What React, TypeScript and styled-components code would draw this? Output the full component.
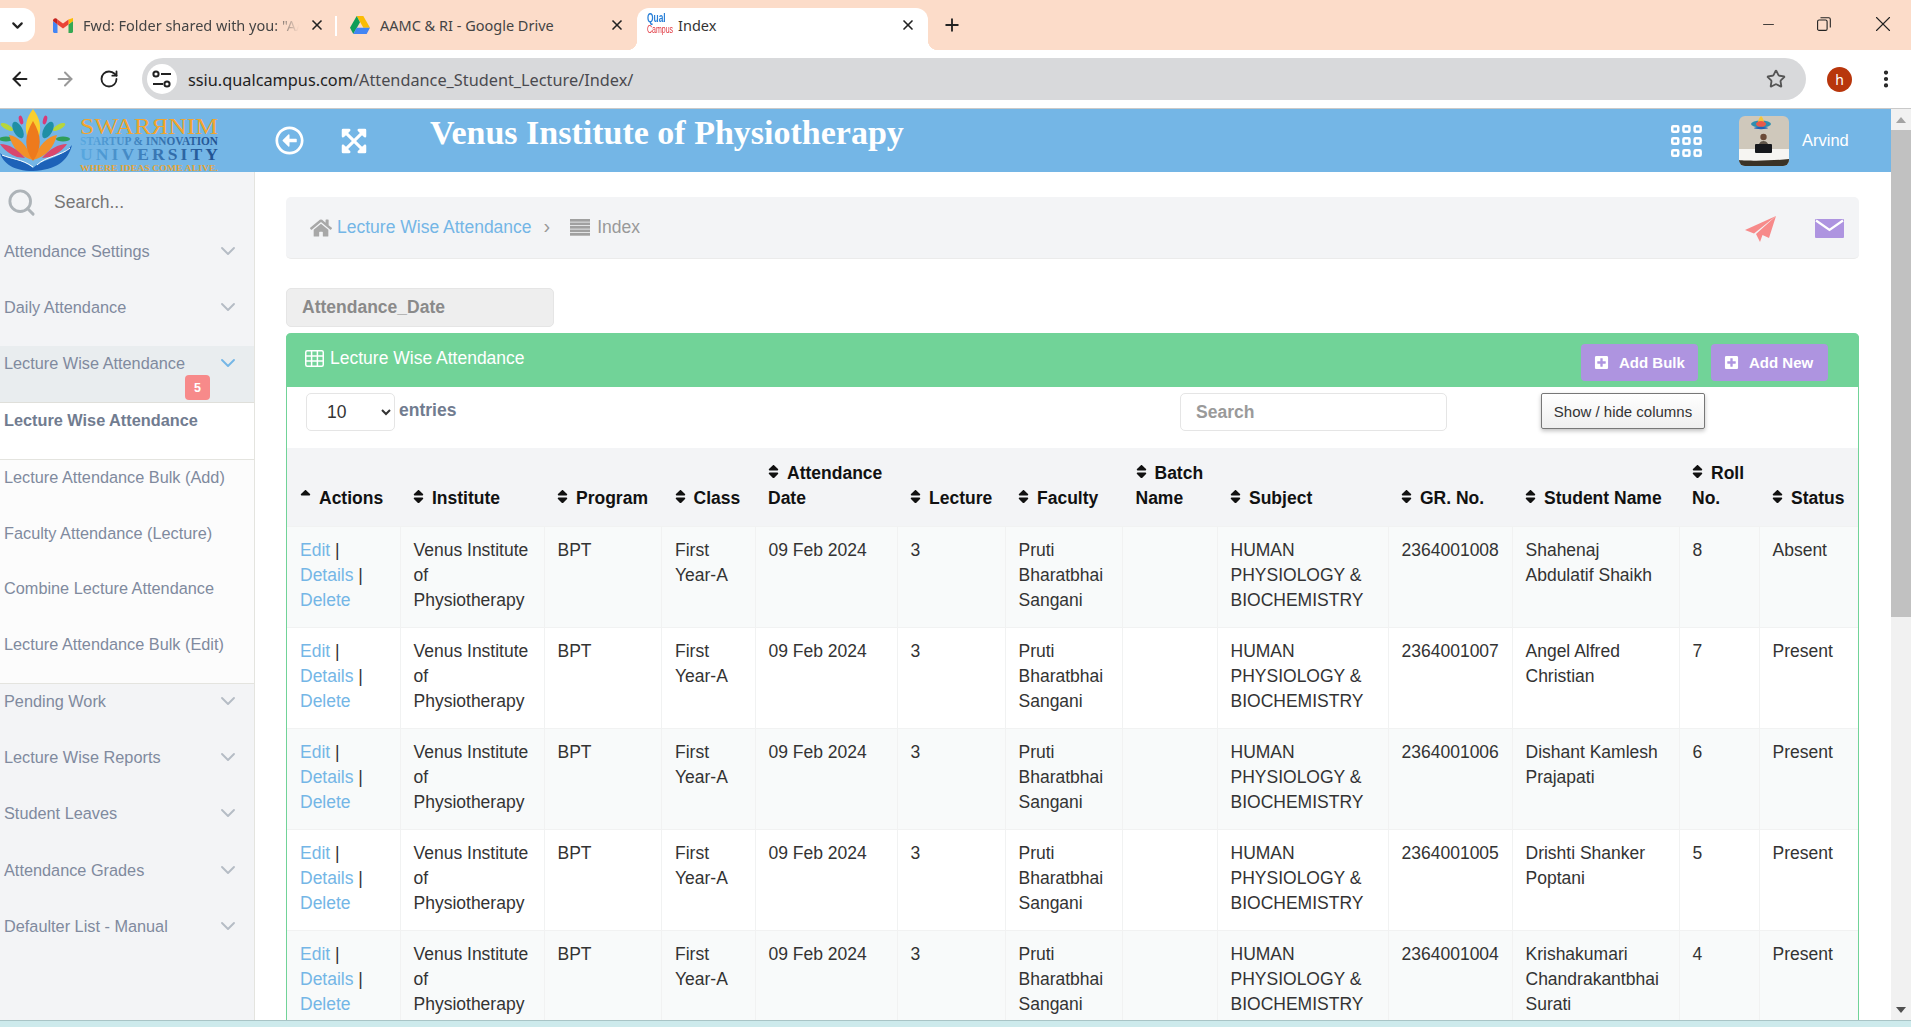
import React from 'react';
import styled, { createGlobalStyle } from 'styled-components';
import { ArrowLeft, ArrowRight, ChevronDown, EllipsisVertical, Minus, Plus, RotateCw, Search, Star, X } from 'lucide-react';
import { FaExpandArrowsAlt, FaHome, FaPlusSquare, FaRegArrowAltCircleLeft, FaSort, FaSortUp } from 'react-icons/fa';

const SIDE_TOP = ['Attendance Settings', 'Daily Attendance'];
const SIDE_SUB = ['Lecture Attendance Bulk (Add)', 'Faculty Attendance (Lecture)', 'Combine Lecture Attendance', 'Lecture Attendance Bulk (Edit)'];
const SIDE_BOTTOM = ['Pending Work', 'Lecture Wise Reports', 'Student Leaves', 'Attendance Grades', 'Defaulter List - Manual'];

const COLUMNS = [
  { label: 'Actions', width: 113 },
  { label: 'Institute', width: 144 },
  { label: 'Program', width: 117.5 },
  { label: 'Class', width: 93.5 },
  { label: 'Attendance Date', width: 142 },
  { label: 'Lecture', width: 108 },
  { label: 'Faculty', width: 117.5 },
  { label: 'Batch Name', width: 94.5 },
  { label: 'Subject', width: 171 },
  { label: 'GR. No.', width: 124 },
  { label: 'Student Name', width: 167 },
  { label: 'Roll No.', width: 80 },
  { label: 'Status', width: 99 },
];

const STUDENTS = [
  { gr: '2364001008', name: 'Shahenaj Abdulatif Shaikh', roll: 8, status: 'Absent' },
  { gr: '2364001007', name: 'Angel Alfred Christian', roll: 7, status: 'Present' },
  { gr: '2364001006', name: 'Dishant Kamlesh Prajapati', roll: 6, status: 'Present' },
  { gr: '2364001005', name: 'Drishti Shanker Poptani', roll: 5, status: 'Present' },
  { gr: '2364001004', name: 'Krishakumari Chandrakantbhai Surati', roll: 4, status: 'Present' },
];

const GmailIcon = () => (
  <svg width="20" height="15" viewBox="0 0 20 15">
    <path d="M0 3v10.5C0 14.3.7 15 1.5 15H4.500V6.500z" fill="#4285f4" />
    <path d="M20 3v10.500c0 .8-.7 1.500-1.500 1.500h-3V6.500z" fill="#34a853" />
    <path d="M15.500 1.500 20 0v3l-4.500 3.500z" fill="#fbbc04" />
    <path d="M4.500 6.500V1.500L10 5.600l5.500-4.100v5L10 10.600z" fill="#ea4335" />
    <path d="M0 3c0-2.400 2.700-3.700 4.500-1.500v5z" fill="#c5221f" />
  </svg>
);

const DriveIcon = () => (
  <svg width="20" height="18" viewBox="0 0 20 18">
    <path d="M6.700 0h6.600l6.700 11.800h-6.600z" fill="#fbbc04" />
    <path d="M6.700 0 0 11.800 3.300 18l6.700-11.800z" fill="#0f9d58" />
    <path d="M6.600 11.800H20L16.700 18H3.300z" fill="#4285f4" />
  </svg>
);

const LogoMark = () => (
  <LogoSvg viewBox="0 0 225 63">
    <defs>
      <linearGradient id="logoBlue" x1="0" x2="1" y1="0" y2="0">
        <stop offset="0" stopColor="#58a8e0" />
        <stop offset="1" stopColor="#1f4f8f" />
      </linearGradient>
    </defs>
    <ellipse cx="7" cy="18" rx="7" ry="2.500" fill="#b7d63c" transform="rotate(28 7 18)" />
    <ellipse cx="59" cy="18" rx="7" ry="2.500" fill="#b7d63c" transform="rotate(-28 59 18)" />
    <ellipse cx="21" cy="11" rx="2" ry="4.500" fill="#d83a78" transform="rotate(-15 21 11)" />
    <ellipse cx="45" cy="11" rx="2" ry="4.500" fill="#d83a78" transform="rotate(15 45 11)" />
    <ellipse cx="18" cy="21" rx="4.500" ry="9" fill="#1f8fa5" transform="rotate(-28 18 21)" />
    <ellipse cx="48" cy="21" rx="4.500" ry="9" fill="#1f8fa5" transform="rotate(28 48 21)" />
    <ellipse cx="6" cy="30" rx="7" ry="2.500" fill="#2f9d5a" />
    <ellipse cx="63" cy="30" rx="7" ry="2.500" fill="#2f9d5a" />
    <path d="M33 0C24 12 23 24 33 40 43 24 42 12 33 0z" fill="#f9cf2f" />
    <path d="M9 26c9 1 18 10 24 25C20 48 12 38 9 26zM57 26c-9 1-18 10-24 25 13-3 21-13 24-25z" fill="#f2902a" />
    <path d="M33 12c-9 15-9 27 0 40 9-13 9-25 0-40z" fill="#ee7a1c" />
    <path d="M0 35c9 0 17 5 25 14l-8-1C11 46 4 41 0 35zM67 35c-9 0-17 5-25 14l8-1c6-2 13-7 17-13z" fill="#d9486e" />
    <path d="M0 44c8 7 22 5 33 15C44 49 60 50 72 36 68 52 56 61 33 62 13 62 3 54 0 44z" fill="#1d62b8" />
    <path d="M2 46c9 4 20 4 31 12M70 39c-9 8-24 8-33 17" fill="none" stroke="#fff" strokeWidth="1" />
    <LogoTitle x="80" y="24.500" textLength="138" lengthAdjust="spacingAndGlyphs">SWARЯNIM</LogoTitle>
    <LogoLine x="80" y="36" textLength="138" lengthAdjust="spacingAndGlyphs">STARTUP &amp; INNOVATION</LogoLine>
    <LogoName x="80" y="51" textLength="138" lengthAdjust="spacing">UNIVERSITY</LogoName>
    <LogoTag x="80" y="62" textLength="138" lengthAdjust="spacingAndGlyphs">WHERE IDEAS COME ALIVE.</LogoTag>
  </LogoSvg>
);

const AvatarPhoto = () => (
  <AvatarSvg viewBox="0 0 50 50">
    <rect width="50" height="50" fill="#cfc8bb" />
    <ellipse cx="22" cy="8" rx="10" ry="3.500" fill="#2f8fb0" />
    <path d="M22 0c-2 2-3 4-3 7h6c0-3-1-5-3-7z" fill="#f4c73a" />
    <ellipse cx="22" cy="8" rx="5" ry="3" fill="#e85a4a" />
    <ellipse cx="22" cy="12" rx="7" ry="1.200" fill="#1d62b8" />
    <rect y="33" width="50" height="12" fill="#f6f5f2" />
    <path d="M0 44c8 1 34 1 50-1v7H0z" fill="#3a3226" />
    <circle cx="24.500" cy="21" r="3.200" fill="#6a4a38" />
    <path d="M19 33c0-5 2-8 5.500-8s5.500 3 5.500 8z" fill="#5e5448" />
    <rect x="16" y="28" width="17" height="9" rx="1" fill="#16181c" />
  </AvatarSvg>
);

const AppGrid = () => (
  <svg width="31" height="32" viewBox="0 0 31 32">
    {[0, 12, 24].flatMap((y) =>
      [0, 11.200, 22.400].map((x) => (
        <rect key={`${x}-${y}`} x={x + 1.25} y={y + 1.25} width="6" height="5.500" rx="1" fill="none" stroke="#fff" strokeWidth="2.500" />
      )),
    )}
  </svg>
);

const PaperPlane = () => (
  <svg width="31" height="26" viewBox="0 0 31 26">
    <path d="M31 0 0 14l9 3.500z" fill="#f78a8a" />
    <path d="M31 0 11 18l4 8 2.500-7 6.500 3z" fill="#f78a8a" />
  </svg>
);

const MailIcon = () => (
  <svg width="29" height="19" viewBox="0 0 29 19">
    <rect width="29" height="19" rx="1" fill="#ae94e0" />
    <path d="M1 1.500 14.500 11 28 1.500" fill="none" stroke="#fff" strokeWidth="2.200" />
  </svg>
);

const ListIcon = () => (
  <svg width="20" height="17" viewBox="0 0 20 17" fill="#a0a0a0">
    {[0, 3.500, 7, 10.500, 14].map((y) => (
      <rect key={y} y={y} width="20" height="2.700" />
    ))}
  </svg>
);

const TableIcon = () => (
  <svg width="19" height="17" viewBox="0 0 19 17" fill="none" stroke="#fff" strokeWidth="1.500">
    <rect x="0.750" y="0.750" width="17.500" height="15.500" rx="1.500" />
    <path d="M0.750 6h17.500M0.750 11h17.500M6.600 0.750v15.500M12.400 0.750v15.500" />
  </svg>
);

const RestoreIcon = () => (
  <svg width="14" height="14" viewBox="0 0 14 14" fill="none" stroke="#222" strokeWidth="1.100">
    <rect x="0.600" y="3" width="9.500" height="10.400" rx="1.500" />
    <path d="M3.500 0.700h8.300a1.500 1.500 0 0 1 1.500 1.500V10.500" />
  </svg>
);

const SidebarItem = ({ label }: { label: string }) => (
  <SideRow>
    <SideLabel>{label}</SideLabel>
    <SideChevron><ChevronDown size={24} color="#b5bcc5" strokeWidth={1.900} /></SideChevron>
  </SideRow>
);

export default function App() {
  return (
    <Screen>
      <GlobalStyle />
      <TabStrip>
        <TabSearch>
          <ChevronDown size={17} strokeWidth={3} color="#222" />
        </TabSearch>
        <Tab $width={297} $divider>
          <GmailIcon />
          <TabTitle $fade>Fwd: Folder shared with you: "AAMC &amp; RI"</TabTitle>
          <TabClose><X size={16} strokeWidth={2.5} /></TabClose>
        </Tab>
        <Tab $width={300}>
          <DriveIcon />
          <TabTitle>AAMC &amp; RI - Google Drive</TabTitle>
          <TabClose><X size={16} strokeWidth={2.5} /></TabClose>
        </Tab>
        <Tab $width={291} $active>
          <Favicon>
            <span>Qual</span>
            <span>Campus</span>
          </Favicon>
          <TabTitle>Index</TabTitle>
          <TabClose><X size={16} strokeWidth={2.5} /></TabClose>
        </Tab>
        <NewTab><Plus size={20} strokeWidth={2.2} color="#222" /></NewTab>
        <WindowControls>
          <Minus size={17} strokeWidth={1.2} color="#222" />
          <RestoreIcon />
          <X size={26} strokeWidth={1} color="#222" />
        </WindowControls>
      </TabStrip>

      <Toolbar>
        <ArrowLeft size={22} strokeWidth={2.2} color="#222" />
        <ArrowRight size={22} strokeWidth={2.2} color="#999" />
        <RotateCw size={20} strokeWidth={2.2} color="#222" />
        <AddressBar>
          <SiteBadge>
            <svg width="20" height="18" viewBox="0 0 20 18" fill="none" stroke="#222" strokeWidth="2">
              <path d="M9 4h10M1 14h10" />
              <circle cx="4" cy="4" r="2.600" />
              <circle cx="15" cy="14" r="2.600" />
            </svg>
          </SiteBadge>
          <Url>ssiu.qualcampus.com<span>/Attendance_Student_Lecture/Index/</span></Url>
          <Star size={20} strokeWidth={2.2} color="#555" />
        </AddressBar>
        <ProfileDot>h</ProfileDot>
        <EllipsisVertical size={22} strokeWidth={2.6} color="#222" />
      </Toolbar>

      <Viewport>
        <Page>
          <Header>
            <LogoMark />
            <HeaderIcon><FaRegArrowAltCircleLeft size={29} /></HeaderIcon>
            <HeaderIcon><FaExpandArrowsAlt size={28} /></HeaderIcon>
            <SiteTitle>Venus Institute of Physiotherapy</SiteTitle>
            <AppGrid />
            <AvatarPhoto />
            <UserName>Arvind</UserName>
          </Header>
          <Body>
            <Sidebar>
              <SideSearch>
                <Search size={31} color="#adb3b8" strokeWidth={2.200} />
                <span>Search...</span>
              </SideSearch>
              {SIDE_TOP.map((item) => <SidebarItem key={item} label={item} />)}
              <SideRow $open>
                <SideLabel>Lecture Wise Attendance</SideLabel>
                <SideChevron><ChevronDown size={24} color="#74b6e6" strokeWidth={1.900} /></SideChevron>
                <Badge>5</Badge>
              </SideRow>
              <SideRow $current>
                <SideLabel $bold>Lecture Wise Attendance</SideLabel>
              </SideRow>
              <SubMenu>
                {SIDE_SUB.map((item) => (
                  <SideRow key={item} $plain>
                    <SideLabel>{item}</SideLabel>
                  </SideRow>
                ))}
              </SubMenu>
              {SIDE_BOTTOM.map((item) => <SidebarItem key={item} label={item} />)}
            </Sidebar>

            <Main>
              <Breadcrumb>
                <FaHome size={22} color="#a8a8a8" />
                <CrumbLink>Lecture Wise Attendance</CrumbLink>
                <CrumbSep>›</CrumbSep>
                <ListIcon />
                <CrumbCurrent>Index</CrumbCurrent>
                <CrumbActions>
                  <PaperPlane />
                  <MailIcon />
                </CrumbActions>
              </Breadcrumb>

              <DateFilter>Attendance_Date</DateFilter>

              <Card>
                <CardHead>
                  <CardTitle>
                    <TableIcon />
                    Lecture Wise Attendance
                  </CardTitle>
                  <AddButton><FaPlusSquare size={15} />Add Bulk</AddButton>
                  <AddButton><FaPlusSquare size={15} />Add New</AddButton>
                </CardHead>
                <Controls>
                  <Entries>
                    <PageSize defaultValue="10">
                      <option value="10">10</option>
                      <option value="25">25</option>
                      <option value="50">50</option>
                    </PageSize>
                    entries
                  </Entries>
                  <SearchBox placeholder="Search" />
                  <ColumnsButton>Show / hide columns</ColumnsButton>
                </Controls>
                <Table>
                  <colgroup>
                    {COLUMNS.map((col) => <col key={col.label} width={col.width} />)}
                  </colgroup>
                  <thead>
                    <tr>
                      {COLUMNS.map((col, i) => (
                        <HeadCell key={col.label}>
                          <SortMark>{i === 0 ? <FaSortUp size={17} /> : <FaSort size={17} />}</SortMark>
                          {col.label}
                        </HeadCell>
                      ))}
                    </tr>
                  </thead>
                  <tbody>
                    {STUDENTS.map((s) => (
                      <Row key={s.gr}>
                        <Cell>
                          <ActionLink>Edit</ActionLink> | <ActionLink>Details</ActionLink> | <ActionLink>Delete</ActionLink>
                        </Cell>
                        <Cell>Venus Institute of Physiotherapy</Cell>
                        <Cell>BPT</Cell>
                        <Cell>First Year-A</Cell>
                        <Cell>09 Feb 2024</Cell>
                        <Cell>3</Cell>
                        <Cell>Pruti Bharatbhai Sangani</Cell>
                        <Cell />
                        <Cell>HUMAN PHYSIOLOGY &amp; BIOCHEMISTRY</Cell>
                        <Cell>{s.gr}</Cell>
                        <Cell>{s.name}</Cell>
                        <Cell>{s.roll}</Cell>
                        <Cell>{s.status}</Cell>
                      </Row>
                    ))}
                  </tbody>
                </Table>
              </Card>
            </Main>
          </Body>
        </Page>
        <ScrollTrack>
          <ScrollArrow $up />
          <ScrollThumb />
          <ScrollArrow />
        </ScrollTrack>
      </Viewport>
      <TaskStrip />
    </Screen>
  );
}

const GlobalStyle = createGlobalStyle`
  html, body {
    margin: 0;
    padding: 0;
    height: 100%;
    overflow: hidden;
    background: #fff;
  }
  * {
    box-sizing: border-box;
  }
`;

const Screen = styled.div`
  width: 1911px;
  height: 1027px;
  display: flex;
  flex-direction: column;
  overflow: hidden;
  font-family: 'Liberation Sans', Arial, sans-serif;
`;

const TabStrip = styled.div`
  height: 50px;
  flex: none;
  display: flex;
  align-items: flex-end;
  background: #fcdcc9;
  padding-left: 40px;
  position: relative;
`;

const TabSearch = styled.div`
  position: absolute;
  left: 0;
  top: 8px;
  width: 35px;
  height: 34px;
  border-radius: 0 12px 12px 0;
  background: #fff;
  display: flex;
  align-items: center;
  justify-content: center;
`;

const Tab = styled.div<{ $width: number; $active?: boolean; $divider?: boolean }>`
  position: relative;
  width: ${(p) => p.$width}px;
  height: 42px;
  padding: 0 12px 8px ${(p) => (p.$active ? 10 : 13)}px;
  display: flex;
  align-items: center;
  gap: 10px;
  background: ${(p) => (p.$active ? '#fff' : 'transparent')};
  border-radius: 12px 12px 0 0;
  color: ${(p) => (p.$active ? '#333' : '#444')};

  ${(p) =>
    p.$divider &&
    `
    &::after {
      content: '';
      position: absolute;
      right: 0;
      top: 8px;
      height: 20px;
      width: 2px;
      background: #fff;
    }
  `}

  ${(p) =>
    p.$active &&
    `
    &::before,
    &::after {
      content: '';
      position: absolute;
      bottom: 0;
      width: 10px;
      height: 10px;
    }
    &::before {
      left: -10px;
      background: radial-gradient(circle at 0 0, transparent 10px, #fff 10.5px);
    }
    &::after {
      right: -10px;
      background: radial-gradient(circle at 100% 0, transparent 10px, #fff 10.5px);
    }
  `}
`;

const TabTitle = styled.span<{ $fade?: boolean }>`
  flex: 1;
  min-width: 0;
  white-space: nowrap;
  overflow: hidden;
  font-family: 'Noto Sans', sans-serif;
  font-size: 14.500px;
  ${(p) =>
    p.$fade &&
    `
    mask-image: linear-gradient(to right, #000 88%, transparent 100%);
  `}
`;

const TabClose = styled.span`
  flex: none;
  display: flex;
  color: #222;
`;

const Favicon = styled.div`
  width: 21px;
  margin-top: -2px;
  display: flex;
  flex-direction: column;
  line-height: 11px;
  font-family: 'Liberation Sans', sans-serif;
  font-size: 10px;
  white-space: nowrap;
  transform: scaleX(0.7);
  transform-origin: left center;

  span:first-child {
    color: #2a80d8;
    font-weight: 700;
    font-size: 12px;
  }
  span:last-child {
    color: #e0333c;
  }
`;

const NewTab = styled.div`
  margin: 0 0 8px 14px;
  height: 34px;
  display: flex;
  align-items: center;
`;

const WindowControls = styled.div`
  margin-left: auto;
  width: 151px;
  padding-right: 15px;
  align-self: flex-start;
  height: 48px;
  display: flex;
  justify-content: space-between;
  align-items: center;
`;

const Toolbar = styled.div`
  height: 59px;
  flex: none;
  display: flex;
  align-items: center;
  padding: 0 14px 0 9px;
  gap: 23px;
  background: #fff;
  border-bottom: 1px solid #c9c9c9;
`;

const AddressBar = styled.div`
  width: 1664px;
  height: 42px;
  border-radius: 21px;
  background: #d8d9db;
  display: flex;
  align-items: center;
  padding: 0 20px 0 5px;
`;

const SiteBadge = styled.div`
  width: 30px;
  height: 30px;
  border-radius: 50%;
  background: #fff;
  display: flex;
  align-items: center;
  justify-content: center;
`;

const Url = styled.div`
  flex: 1;
  margin: 2px 0 0 11px;
  font-family: 'Noto Sans', sans-serif;
  font-size: 16.300px;
  color: #1f1f1f;
  white-space: nowrap;

  span {
    color: #4a4a4f;
  }
`;

const ProfileDot = styled.div`
  width: 25px;
  height: 25px;
  margin-left: -2px;
  border-radius: 50%;
  background: #b8360c;
  color: #fff;
  font-family: 'Noto Sans', sans-serif;
  font-size: 14px;
  display: flex;
  align-items: center;
  justify-content: center;
`;

const Viewport = styled.div`
  flex: 1;
  min-height: 0;
  display: flex;
`;

const Page = styled.div`
  flex: 1;
  min-width: 0;
  display: flex;
  flex-direction: column;
`;

const Header = styled.header`
  height: 63px;
  flex: none;
  display: flex;
  align-items: center;
  background: #74b6e6;
  color: #fff;
`;

const LogoSvg = styled.svg`
  width: 225px;
  height: 63px;
  flex: none;
  margin-right: 50px;
`;

const LogoTitle = styled.text`
  font-family: 'Liberation Serif', serif;
  font-size: 24px;
  fill: #f3a52c;
`;

const LogoLine = styled.text`
  font-family: 'Liberation Serif', serif;
  font-size: 11.500px;
  font-weight: 700;
  fill: url(#logoBlue);
`;

const LogoName = styled.text`
  font-family: 'Liberation Serif', serif;
  font-size: 17.500px;
  font-weight: 700;
  fill: url(#logoBlue);
`;

const LogoTag = styled.text`
  font-family: 'Liberation Serif', serif;
  font-size: 8px;
  font-weight: 700;
  fill: #e3a63a;
`;

const HeaderIcon = styled.div`
  display: flex;
  width: 29px;
  margin-right: 36px;
  color: #fff;
`;

const SiteTitle = styled.h1`
  flex: 1;
  margin: -15px 0 0 25px;
  font-family: 'Liberation Serif', serif;
  font-size: 34px;
  font-weight: 700;
  color: #fff;
  white-space: nowrap;
`;

const AvatarSvg = styled.svg`
  width: 50px;
  height: 50px;
  margin-left: 37px;
  border-radius: 6px;
  flex: none;
`;

const UserName = styled.div`
  width: 102px;
  padding-left: 13px;
  font-size: 16.500px;
  color: #fff;
`;

const Body = styled.div`
  flex: 1;
  min-height: 0;
  display: flex;
`;

const Sidebar = styled.aside`
  width: 255px;
  flex: none;
  background: #f3f4f6;
  border-right: 1px solid #e4e4df;
  overflow: hidden;
`;

const SideSearch = styled.div`
  height: 62px;
  padding: 15px 0 0 6px;
  display: flex;
  align-items: flex-start;
  gap: 17px;
  color: #777;
  font-size: 17.500px;
  line-height: 30px;
`;

const SideRow = styled.div<{ $open?: boolean; $current?: boolean; $plain?: boolean }>`
  position: relative;
  height: ${(p) => (p.$plain ? 55.8 : 56.2)}px;
  padding: 8px 14px 0 4px;
  display: flex;
  align-items: flex-start;
  justify-content: space-between;
  background: ${(p) => (p.$open ? '#e9edef' : p.$current ? '#fff' : 'transparent')};
  ${(p) => p.$open && 'border-bottom: 1px solid #dfdfda;'}
`;

const SideChevron = styled.span`
  display: flex;
  margin-top: -3px;
`;

const SideLabel = styled.span<{ $bold?: boolean }>`
  font-size: 16.300px;
  line-height: 18px;
  font-weight: ${(p) => (p.$bold ? 700 : 400)};
  color: ${(p) => (p.$bold ? '#717c90' : '#808a9e')};
  white-space: nowrap;
`;

const Badge = styled.span`
  position: absolute;
  left: 185px;
  top: 29px;
  width: 25px;
  height: 25px;
  border-radius: 4px;
  background: #f78a8a;
  color: #fff;
  font-size: 12.500px;
  font-weight: 700;
  display: flex;
  align-items: center;
  justify-content: center;
`;

const SubMenu = styled.div`
  background: #fcfcfc;
  border-top: 1px solid #e4e4df;
  border-bottom: 1px solid #e4e4df;
`;

const Main = styled.main`
  flex: 1;
  min-width: 0;
  padding: 25px 32px 0 31px;
  overflow: hidden;
  background: #fff;
`;

const Breadcrumb = styled.nav`
  height: 62px;
  display: flex;
  align-items: center;
  padding: 0 15px 0 24px;
  background: #f3f4f6;
  border-radius: 5px;
  border-bottom: 1px solid #ebebeb;
  font-size: 17.500px;
`;

const CrumbLink = styled.span`
  margin-left: 5px;
  color: #74b6e6;
`;

const CrumbSep = styled.span`
  margin: -3px 20px 0 12px;
  color: #999;
  font-size: 20px;
`;

const CrumbCurrent = styled.span`
  margin-left: 7px;
  color: #999;
`;

const CrumbActions = styled.div`
  margin-left: auto;
  display: flex;
  align-items: center;
  gap: 39px;
  padding-top: 2px;
`;

const DateFilter = styled.div`
  width: 268px;
  height: 39px;
  margin-top: 29px;
  padding-left: 15px;
  display: flex;
  align-items: center;
  background: #eeeeee;
  border: 1px solid #e5e5e5;
  border-radius: 5px;
  color: #8a8a8a;
  font-size: 17.500px;
  font-weight: 700;
`;

const Card = styled.section`
  margin-top: 6px;
  border-left: 1px solid #71d398;
  border-right: 1px solid #71d398;
  border-radius: 5px 5px 0 0;
`;

const CardHead = styled.div`
  height: 54px;
  margin: 0 -1px;
  padding: 11px 31px 0 19px;
  display: flex;
  align-items: flex-start;
  gap: 13px;
  background: #71d398;
  border-radius: 5px 5px 0 0;
  color: #fff;
`;

const CardTitle = styled.div`
  flex: 1;
  display: flex;
  align-items: center;
  gap: 6px;
  height: 28px;
  font-size: 17.500px;
`;

const AddButton = styled.button`
  width: 117px;
  height: 37px;
  padding: 0 0 1px 13px;
  display: flex;
  align-items: center;
  gap: 10px;
  border: 0;
  border-radius: 4px;
  background: #ae94e0;
  color: #fff;
  font-family: inherit;
  font-size: 15px;
  font-weight: 700;
`;

const Controls = styled.div`
  height: 61px;
  padding: 6px 0 0 19px;
  display: grid;
  grid-template-columns: 874px 361px auto;
  align-items: start;
`;

const Entries = styled.label`
  display: flex;
  align-items: flex-start;
  gap: 4px;
  line-height: 34px;
  color: #717c90;
  font-size: 17.500px;
  font-weight: 700;
`;

const PageSize = styled.select`
  width: 89px;
  height: 38px;
  padding-left: 16px;
  background: #fff;
  border: 1px solid #e5e5e5;
  border-radius: 5px;
  color: #333;
  font-family: inherit;
  font-size: 17.500px;
`;

const SearchBox = styled.input`
  width: 267px;
  height: 38px;
  padding: 0 15px;
  border: 1px solid #e5e5e5;
  border-radius: 5px;
  font-family: inherit;
  font-size: 17.500px;
  font-weight: 700;

  &::placeholder {
    color: #9a9a9a;
    opacity: 1;
  }
`;

const ColumnsButton = styled.button`
  width: 164px;
  height: 36px;
  padding: 0;
  border: 1px solid #777;
  border-radius: 2px;
  background: linear-gradient(#ffffff, #efefef);
  box-shadow: 0 2px 4px rgba(0, 0, 0, 0.25);
  color: #333;
  font-family: inherit;
  font-size: 15px;
`;

const Table = styled.table`
  width: 100%;
  table-layout: fixed;
  border-collapse: collapse;
  color: #333;
  font-size: 17.500px;
  line-height: 25px;
`;

const HeadCell = styled.th`
  height: 78px;
  padding: 10px 6px 15px 13px;
  vertical-align: bottom;
  text-align: left;
  font-weight: 700;
  color: #111;
  background: #f3f4f6;
`;

const SortMark = styled.span`
  display: inline-block;
  width: 18px;
  margin-right: 1px;
  line-height: 0;

  svg {
    margin-left: -3px;
    vertical-align: -1px;
  }
`;

const Row = styled.tr`
  &:nth-child(odd) {
    background: #f8fafa;
  }
`;

const Cell = styled.td`
  height: 101px;
  padding: 11px 13px;
  vertical-align: top;
  border: 1px solid #f1f2f2;

  &:first-child {
    border-left: 0;
  }
  &:last-child {
    border-right: 0;
  }
`;

const ActionLink = styled.a`
  color: #74b6e6;
`;

const ScrollTrack = styled.div`
  width: 20px;
  flex: none;
  display: flex;
  flex-direction: column;
  background: #f1f1f1;
`;

const ScrollArrow = styled.div<{ $up?: boolean }>`
  height: 21px;
  flex: none;
  display: flex;
  align-items: center;
  justify-content: center;

  &::before {
    content: '';
    border-left: 5px solid transparent;
    border-right: 5px solid transparent;
    ${(p) => (p.$up ? 'border-bottom: 6px solid #a3a3a3;' : 'border-top: 6px solid #505050;')}
  }
`;

const ScrollThumb = styled.div`
  height: 487px;
  margin-bottom: auto;
  background: #c1c1c1;
`;

const TaskStrip = styled.div`
  height: 7px;
  flex: none;
  background: #cdeaec;
  border-top: 1px solid #a9c4c6;
`;
